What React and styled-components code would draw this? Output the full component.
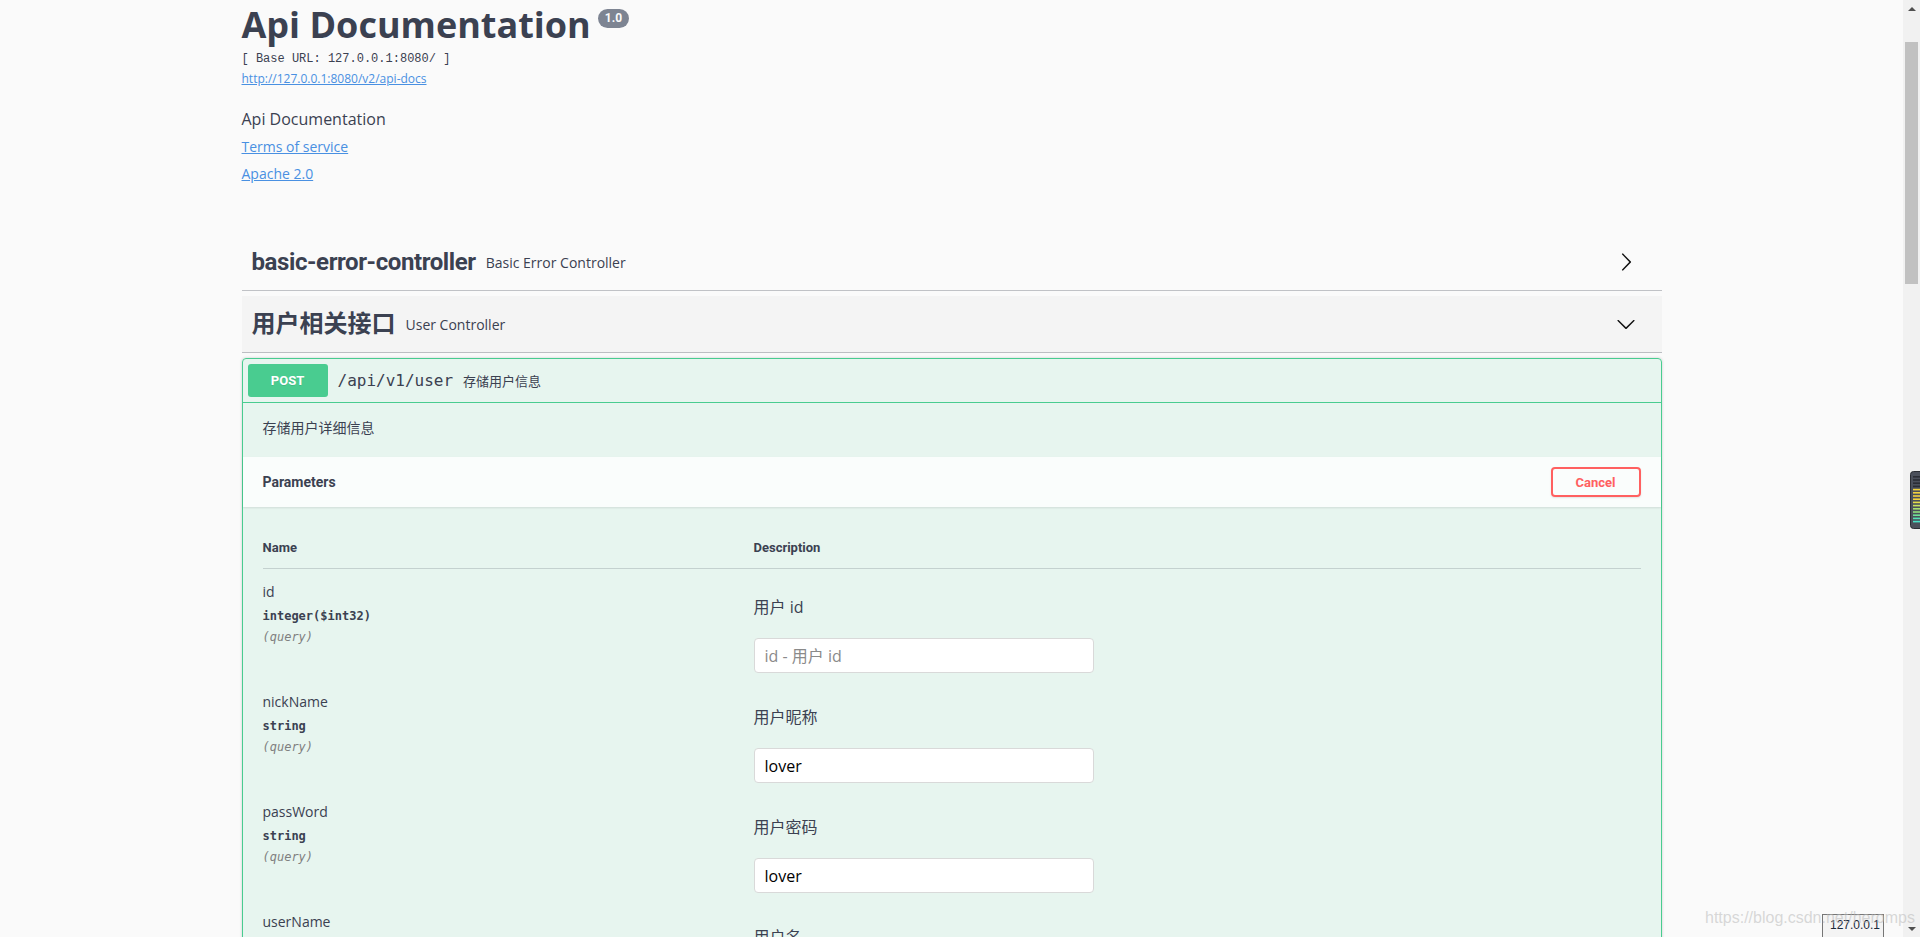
import React from "react";
import styled, { createGlobalStyle } from "styled-components";

const GlobalStyle = createGlobalStyle`
  html, body {
    margin: 0;
    padding: 0;
    height: 100%;
    overflow: hidden;
    background: #fafafa;
  }
  body {
    font-family: "Open Sans", "Noto Sans CJK SC", sans-serif;
    color: #3b4151;
  }
  * {
    box-sizing: border-box;
  }
`;

const params = [
  { name: "id", type: "integer($int32)", desc: "用户 id", placeholder: "id - 用户 id", value: "" },
  { name: "nickName", type: "string", desc: "用户昵称", placeholder: "nickName - 用户昵称", value: "lover" },
  { name: "passWord", type: "string", desc: "用户密码", placeholder: "passWord - 用户密码", value: "lover" },
  { name: "userName", type: "string", desc: "用户名", placeholder: "userName - 用户名", value: "lover" },
];

const meterColors = [
  "#2b2e35", "#2b2e35", "#2b2e35", "#2b2e35",
  "#f2d23c", "#f2d23c", "#f2d23c", "#f2d23c", "#e4dc48",
  "#c9e25c", "#a8e26c", "#8fe07c", "#6fe296", "#55e3b4", "#48e2c6",
];

const ArrowRight = () => (
  <svg width="20" height="20" viewBox="0 0 20 20">
    <path
      fill="#111"
      d="M13.25 10L6.109 2.58c-.268-.27-.268-.707 0-.979.268-.27.701-.27.969 0l7.83 7.908c.268.271.268.709 0 .979l-7.83 7.908c-.268.271-.701.27-.969 0-.268-.269-.268-.707 0-.979L13.25 10z"
    />
  </svg>
);

const ArrowDown = () => (
  <svg width="20" height="20" viewBox="0 0 20 20">
    <path
      fill="#111"
      d="M17.418 6.109c.272-.268.709-.268.979 0s.271.701 0 .969l-7.908 7.83c-.27.268-.707.268-.979 0l-7.908-7.83c-.27-.268-.27-.701 0-.969.271-.268.709-.268.979 0L10 13.25l7.418-7.141z"
    />
  </svg>
);

const App = () => {
  return (
    <Page>
      <GlobalStyle />
      <Main>
        <Wrapper>
          <Info>
            <Title>
              Api Documentation
              <Version>1.0</Version>
            </Title>
            <BaseUrl>[ Base URL: 127.0.0.1:8080/ ]</BaseUrl>
            <SpecLink href="#">http://127.0.0.1:8080/v2/api-docs</SpecLink>
            <InfoText>Api Documentation</InfoText>
            <InfoLink href="#" $gap={7}>Terms of service</InfoLink>
            <InfoLink href="#" $gap={8}>Apache 2.0</InfoLink>
          </Info>

          <TagRow>
            <TagName $tight>basic-error-controller</TagName>
            <TagDesc>Basic Error Controller</TagDesc>
            <ArrowRight />
          </TagRow>
          <TagRow $open>
            <TagName>用户相关接口</TagName>
            <TagDesc>User Controller</TagDesc>
            <ArrowDown />
          </TagRow>

          <OpBlock>
            <Summary>
              <Method>POST</Method>
              <Path>/api/v1/user</Path>
              <SummaryDesc>存储用户信息</SummaryDesc>
            </Summary>
            <DescWrapper>存储用户详细信息</DescWrapper>
            <SectionHeader>
              <SectionTitle>Parameters</SectionTitle>
              <CancelButton>Cancel</CancelButton>
            </SectionHeader>
            <TableWrap>
              <HeadRow>
                <HeadCell>Name</HeadCell>
                <HeadCell>Description</HeadCell>
              </HeadRow>
              {params.map((p) => (
                <ParamRow key={p.name}>
                  <div>
                    <ParamName>{p.name}</ParamName>
                    <ParamType>{p.type}</ParamType>
                    <ParamIn>(query)</ParamIn>
                  </div>
                  <div>
                    <ParamDesc>{p.desc}</ParamDesc>
                    <ParamInput placeholder={p.placeholder} defaultValue={p.value} />
                  </div>
                </ParamRow>
              ))}
            </TableWrap>
          </OpBlock>
        </Wrapper>
      </Main>

      <ScrollBar>
        <ScrollArrow>
          <Triangle $up />
        </ScrollArrow>
        <ScrollTrack>
          <ScrollThumb />
        </ScrollTrack>
        <ScrollArrow>
          <Triangle />
        </ScrollArrow>
      </ScrollBar>

      <Meter width="10" height="58" viewBox="0 0 10 58">
        <rect x="0.5" y="0.5" width="14" height="57" rx="3" fill="#4b505b" stroke="#2a2d33" />
        {meterColors.map((c, i) => (
          <rect key={i} x="3" y={5 + i * 3.2} width="7" height="1.6" fill={c} />
        ))}
      </Meter>
      <HostTip>127.0.0.1</HostTip>
      <Watermark>https://blog.csdn.net/heromps</Watermark>
    </Page>
  );
};

export default App;

const Page = styled.div`
  position: relative;
  display: flex;
  width: 100%;
  height: 100vh;
  overflow: hidden;
  background: #fafafa;
`;

const Main = styled.div`
  flex: 1;
  min-width: 0;
  overflow: hidden;
`;

const Wrapper = styled.div`
  max-width: 1460px;
  margin: 0 auto;
  padding: 0 20px;
`;

const Info = styled.div`
  display: flex;
  flex-direction: column;
  align-items: flex-start;
  margin-bottom: 51px;
`;

const Title = styled.h2`
  display: flex;
  align-items: flex-start;
  margin: 0;
  font-family: "Open Sans", sans-serif;
  font-size: 36px;
  font-weight: 700;
  line-height: 49px;
  color: #3b4151;
`;

const Version = styled.span`
  display: inline-flex;
  align-items: center;
  height: 19px;
  margin: 9px 0 0 7px;
  padding: 0 7px;
  border-radius: 57px;
  background: #7d8492;
  color: #fafafa;
  font-family: Roboto, sans-serif;
  font-size: 12px;
  font-weight: 700;
  line-height: 19px;
`;

const BaseUrl = styled.pre`
  margin: 3px 0 0;
  font-family: "Liberation Mono", monospace;
  font-size: 12px;
  line-height: 14px;
  color: #3b4151;
`;

const SpecLink = styled.a`
  display: block;
  margin-top: 5px;
  font-size: 12px;
  line-height: 16px;
  color: #4990e2;
  text-decoration: underline;
`;

const InfoText = styled.p`
  margin: 21px 0 0;
  font-size: 16px;
  line-height: 22px;
`;

const InfoLink = styled.a`
  display: block;
  margin-top: ${(p) => p.$gap}px;
  font-size: 14px;
  line-height: 19px;
  color: #4990e2;
  text-decoration: underline;
`;

const TagRow = styled.div`
  display: flex;
  align-items: center;
  padding: 10px 26px 10px 10px;
  margin-bottom: 5px;
  border-bottom: 1px solid rgba(59, 65, 81, 0.3);
  background: ${(p) => (p.$open ? "#f4f4f4" : "transparent")};
  cursor: pointer;
`;

const TagName = styled.span`
  font-family: Roboto, "Noto Sans CJK SC", sans-serif;
  font-size: 24px;
  font-weight: 700;
  line-height: 36px;
  letter-spacing: ${(p) => (p.$tight ? "-0.4px" : "0")};
  color: #3b4151;
`;

const TagDesc = styled.small`
  flex: 1;
  padding: 0 10px;
  font-family: "Open Sans", "Noto Sans CJK SC", sans-serif;
  font-size: 14px;
  color: #3b4151;
`;

const OpBlock = styled.div`
  border: 1px solid #49cc90;
  border-radius: 4px;
  background: rgba(73, 204, 144, 0.1);
  box-shadow: 0 0 3px rgba(0, 0, 0, 0.19);
`;

const Summary = styled.div`
  display: flex;
  align-items: center;
  padding: 5px;
  border-bottom: 1px solid #49cc90;
`;

const Method = styled.span`
  min-width: 80px;
  padding: 6px 15px;
  border-radius: 3px;
  background: #49cc90;
  color: #fff;
  text-align: center;
  font-family: Roboto, sans-serif;
  font-size: 13px;
  font-weight: 700;
  line-height: 21px;
  text-shadow: 0 1px 0 rgba(0, 0, 0, 0.1);
`;

const Path = styled.span`
  padding: 0 10px;
  font-family: "DejaVu Sans Mono", monospace;
  font-size: 16px;
  color: #3b4151;
`;

const SummaryDesc = styled.span`
  flex: 1;
  font-size: 13px;
  color: #3b4151;
`;

const DescWrapper = styled.div`
  padding: 15px 20px;
  margin-bottom: 5px;
  font-size: 14px;
  line-height: 19px;
`;

const SectionHeader = styled.div`
  display: flex;
  align-items: center;
  min-height: 50px;
  padding: 8px 20px;
  background: rgba(255, 255, 255, 0.8);
  box-shadow: 0 1px 2px rgba(0, 0, 0, 0.1);
`;

const SectionTitle = styled.h4`
  flex: 1;
  margin: 0;
  font-family: Roboto, sans-serif;
  font-size: 14px;
  font-weight: 700;
  color: #3b4151;
`;

const CancelButton = styled.button`
  width: 90px;
  height: 30px;
  border: 2px solid #ff6060;
  border-radius: 4px;
  background: transparent;
  color: #ff6060;
  font-family: Roboto, sans-serif;
  font-size: 13px;
  font-weight: 700;
  box-shadow: 0 1px 2px rgba(0, 0, 0, 0.1);
  cursor: pointer;
`;

const TableWrap = styled.div`
  padding: 20px;
`;

const HeadRow = styled.div`
  display: grid;
  grid-template-columns: 491px 1fr;
  padding: 13px 0 12px;
  border-bottom: 1px solid rgba(59, 65, 81, 0.2);
`;

const HeadCell = styled.div`
  font-family: Roboto, sans-serif;
  font-size: 13px;
  font-weight: 700;
  line-height: 16px;
  color: #3b4151;
`;

const ParamRow = styled.div`
  display: grid;
  grid-template-columns: 491px 1fr;
  align-items: start;
  padding: 13px 0 6px;
`;

const ParamName = styled.div`
  font-size: 14px;
  line-height: 20px;
`;

const ParamType = styled.div`
  margin-top: 7px;
  font-family: "DejaVu Sans Mono", monospace;
  font-size: 12px;
  font-weight: 700;
  line-height: 14px;
`;

const ParamIn = styled.div`
  margin-top: 7px;
  font-family: "DejaVu Sans Mono", monospace;
  font-size: 12px;
  font-style: italic;
  line-height: 14px;
  color: #808080;
`;

const ParamDesc = styled.p`
  margin: 13px 0 19px;
  font-size: 16px;
  line-height: 24px;
`;

const ParamInput = styled.input`
  display: block;
  width: 340px;
  height: 35px;
  padding: 0 10px;
  border: 1px solid #d9d9d9;
  border-radius: 4px;
  background: #fff;
  font-family: "Open Sans", "Noto Sans CJK SC", sans-serif;
  font-size: 16px;
  color: #000;
  outline: none;

  &::placeholder {
    color: #8a8a8a;
  }
`;

const ScrollBar = styled.div`
  display: flex;
  flex-direction: column;
  width: 17px;
  flex-shrink: 0;
  background: #f1f1f1;
`;

const ScrollArrow = styled.div`
  display: flex;
  align-items: center;
  justify-content: center;
  height: 17px;
`;

const Triangle = styled.span`
  width: 0;
  height: 0;
  border-left: 4px solid transparent;
  border-right: 4px solid transparent;
  ${(p) =>
    p.$up ? "border-bottom: 4px solid #505050;" : "border-top: 4px solid #505050;"}
`;

const ScrollTrack = styled.div`
  flex: 1;
  padding: 25px 2px 0;
`;

const ScrollThumb = styled.div`
  height: 242px;
  background: #c1c1c1;
`;

const Meter = styled.svg`
  position: absolute;
  right: 0;
  top: 471px;
  overflow: hidden;
`;

const HostTip = styled.div`
  position: absolute;
  left: 1822px;
  top: 914px;
  width: 62px;
  height: 30px;
  padding: 3px 0 0 7px;
  border: 1px solid #767676;
  background: #f4f4f4;
  font-family: "Liberation Sans", sans-serif;
  font-size: 12px;
  line-height: 14px;
  color: #1c2a3a;
`;

const Watermark = styled.div`
  position: absolute;
  left: 1705px;
  top: 908px;
  font-family: "Liberation Sans", sans-serif;
  font-size: 16px;
  line-height: 20px;
  color: rgba(185, 185, 185, 0.55);
  pointer-events: none;
  white-space: nowrap;
`;
